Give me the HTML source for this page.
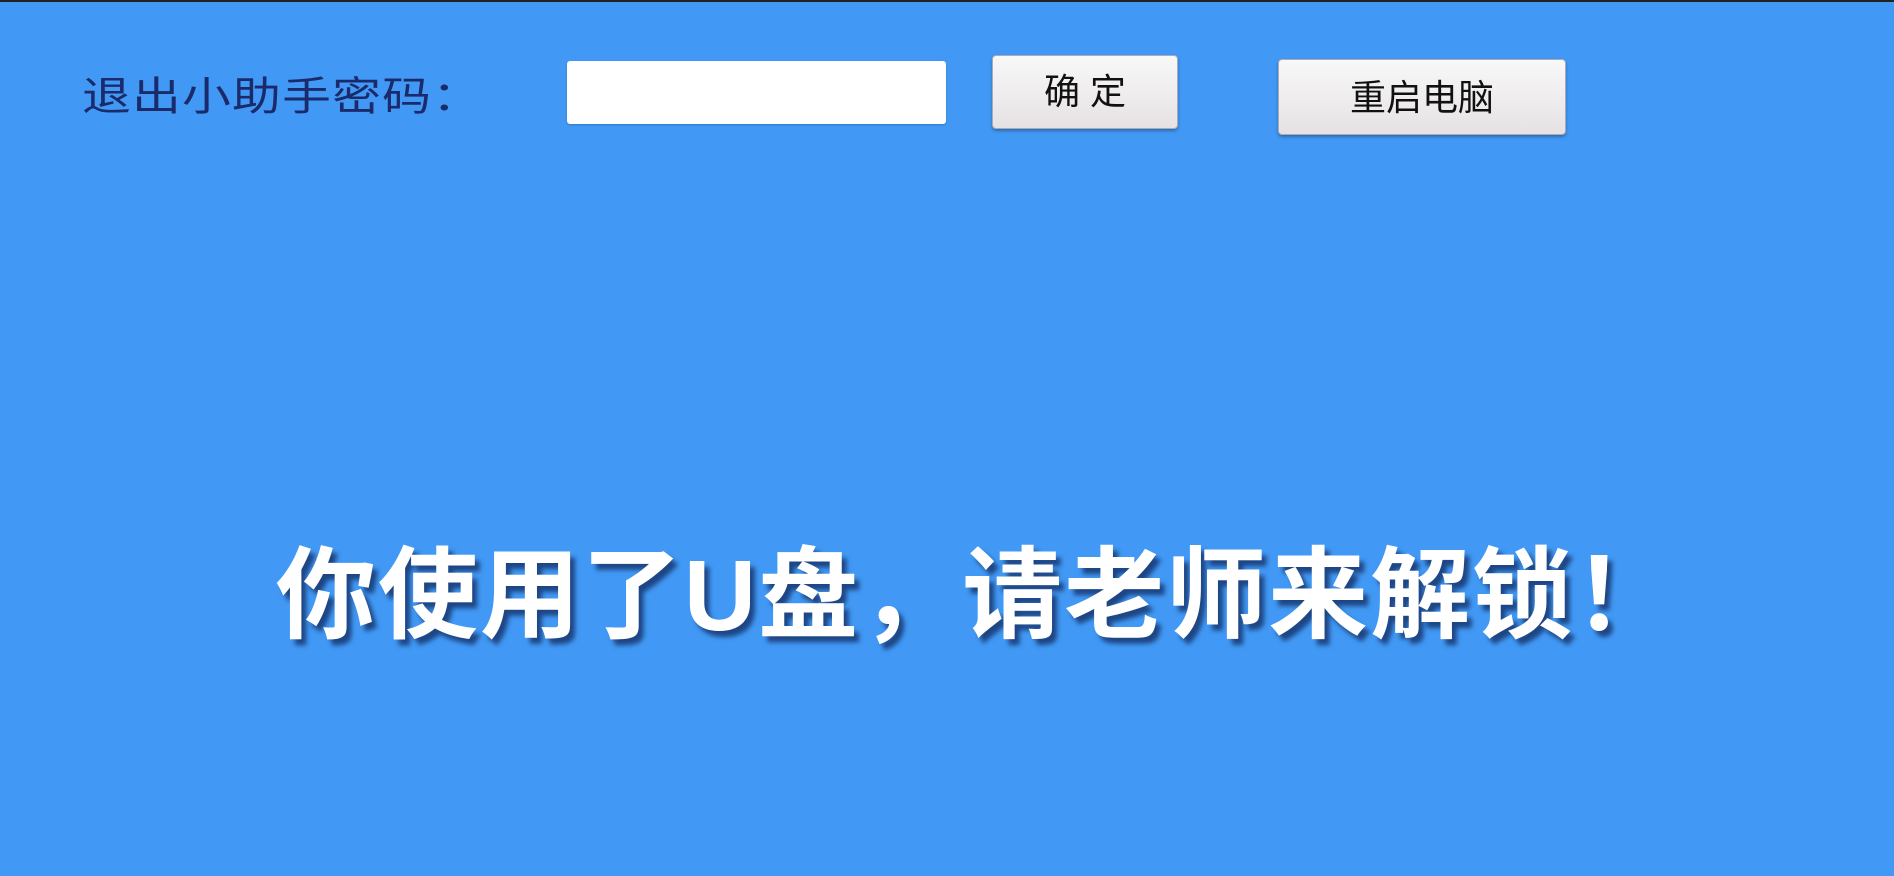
<!DOCTYPE html>
<html><head><meta charset="utf-8"><style>
html,body{margin:0;padding:0}
body{width:1894px;height:876px;background:#4199f5;position:relative;overflow:hidden;font-family:"Liberation Sans","Noto Sans CJK SC",sans-serif}
.top{position:absolute;left:0;top:0;width:1894px;height:2px;background:#222}
.lbl{position:absolute;left:82px;top:72px;font-size:40px;line-height:50px;color:#1a2a6a;transform:scaleX(1.22);transform-origin:left;letter-spacing:1px}
.inp{position:absolute;left:567px;top:61px;width:379px;height:63px;background:#fff;border-radius:3px;box-shadow:0 1px 2px rgba(0,0,0,.2)}
.btn{position:absolute;background:linear-gradient(#f8f8f8,#e6e2e4);border:1px solid #aab;border-radius:4px;box-shadow:0 2px 3px rgba(0,0,0,.3);color:#111;font-size:36px;text-align:center;box-sizing:border-box}
.b1{left:992px;top:55px;width:186px;height:74px;line-height:72px}
.b2{left:1278px;top:59px;width:288px;height:76px;line-height:76px}
.big{position:absolute;left:29px;width:1894px;top:536px;text-align:center;font-size:100px;line-height:120px;font-weight:bold;color:#fff;text-shadow:5px 6px 5px rgba(0,0,40,.55);letter-spacing:2px}
</style></head><body>
<div class="top"></div>
<div class="lbl">退出小助手密码：</div>
<div class="inp"></div>
<div class="btn b1">确 定</div>
<div class="btn b2">重启电脑</div>
<div class="big">你使用了U盘，请老师来解锁！</div>
</body></html>
